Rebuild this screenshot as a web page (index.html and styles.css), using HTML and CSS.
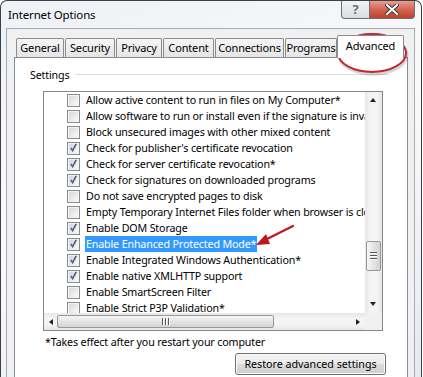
FILE: index.html
```html
<!DOCTYPE html>
<html>
<head>
  <meta charset="UTF-8">
  <title>Internet Options</title>
  <link rel="stylesheet" href="styles.css">
</head>
<body>
  <div class="window">
    <div class="titlebar">
      <span class="title">Internet Options</span>
      <div class="caption">
        <span class="cap cap-help">?</span>
        <span class="cap cap-close">
          <svg width="14" height="11" viewBox="0 0 14 11"><path d="M2 1 L12 10 M12 1 L2 10" stroke="#3b3b3b" stroke-width="4" stroke-linecap="square"/><path d="M2 1 L12 10 M12 1 L2 10" stroke="#fff" stroke-width="2" stroke-linecap="square"/></svg>
        </span>
      </div>
    </div>
    <div class="client">
      <div class="tabs">
        <span class="tab t-general">General</span>
        <span class="tab t-security">Security</span>
        <span class="tab t-privacy">Privacy</span>
        <span class="tab t-content">Content</span>
        <span class="tab t-connections">Connections</span>
        <span class="tab t-programs">Programs</span>
        <span class="tab t-advanced active">Advanced</span>
      </div>
      <div class="panel">
        <div class="group-label"><span>Settings</span><span class="rule"></span></div>
        <div class="listbox">
          <div class="rows">
            <div class="row"><span class="cb"></span><span class="label">Allow active content to run in files on My Computer*</span></div>
            <div class="row"><span class="cb"></span><span class="label">Allow software to run or install even if the signature is invalid</span></div>
            <div class="row"><span class="cb"></span><span class="label">Block unsecured images with other mixed content</span></div>
            <div class="row"><span class="cb on"></span><span class="label">Check for publisher's certificate revocation</span></div>
            <div class="row"><span class="cb on"></span><span class="label">Check for server certificate revocation*</span></div>
            <div class="row"><span class="cb on"></span><span class="label">Check for signatures on downloaded programs</span></div>
            <div class="row"><span class="cb"></span><span class="label">Do not save encrypted pages to disk</span></div>
            <div class="row"><span class="cb"></span><span class="label">Empty Temporary Internet Files folder when browser is closed</span></div>
            <div class="row"><span class="cb on"></span><span class="label">Enable DOM Storage</span></div>
            <div class="row"><span class="cb on"></span><span class="label selected">Enable Enhanced Protected Mode*</span></div>
            <div class="row"><span class="cb on"></span><span class="label">Enable Integrated Windows Authentication*</span></div>
            <div class="row"><span class="cb on"></span><span class="label">Enable native XMLHTTP support</span></div>
            <div class="row"><span class="cb"></span><span class="label">Enable SmartScreen Filter</span></div>
            <div class="row"><span class="cb"></span><span class="label">Enable Strict P3P Validation*</span></div>
          </div>
          <div class="vscroll">
            <span class="arr arr-up"></span>
            <span class="vthumb"><i></i><i></i><i></i></span>
            <span class="arr arr-down"></span>
          </div>
          <div class="hscroll">
            <span class="arr arr-left"></span>
            <span class="hthumb"><i></i><i></i><i></i></span>
            <span class="arr arr-right"></span>
          </div>
          <div class="corner"></div>
        </div>
        <p class="note">*Takes effect after you restart your computer</p>
        <div class="actions"><button class="btn">Restore advanced settings</button></div>
      </div>
    </div>

    <svg class="ring" width="78" height="46" viewBox="0 0 78 46">
      <ellipse cx="39" cy="24" rx="34" ry="19" fill="none" stroke="rgba(0,0,0,0.16)" stroke-width="3"/>
      <ellipse cx="38" cy="22" rx="34" ry="19" fill="none" stroke="#c4262e" stroke-width="2"/>
    </svg>
    <svg class="pointer" width="44" height="26" viewBox="0 0 44 26">
      <path d="M39 3 L9 18" stroke="#c0151c" stroke-width="2.2" stroke-linecap="round"/>
      <path d="M2 22 L12 11 L16 21 Z" fill="#c0151c"/>
    </svg>
  </div>
</body>
</html>
```

FILE: styles.css
```css
* {
  margin: 0;
  padding: 0;
  box-sizing: border-box;
}
html, body {
  height: 377px;
  overflow: hidden;
}
body {
  background: #fff;
  font-family: "Noto Sans", "Open Sans", sans-serif;
  font-size: 10.7px;
  letter-spacing: -0.15px;
  color: #000;
}
.window {
  position: relative;
  width: 422px;
  height: 377px;
  overflow: hidden;
  border: 1px solid #3c3f44;
  border-bottom: none;
  border-radius: 7px 7px 0 0;
  background: linear-gradient(160deg, #eef1f5 0%, #f9fafc 45%, #e6eaef 100%);
  padding: 0 6px 0 5px;
}
.titlebar {
  display: flex;
  justify-content: space-between;
  align-items: flex-start;
  height: 27px;
}
.title {
  padding: 6px 0 0 2px;
  line-height: 16px;
  font-size: 11.5px;
}
.caption {
  display: flex;
  margin-top: -1px;
}
.cap {
  display: flex;
  align-items: center;
  justify-content: center;
  height: 19px;
  border: 1px solid #6b6f77;
  border-top: none;
}
.cap-help {
  width: 29px;
  border-radius: 0 0 0 4px;
  background: linear-gradient(#f4f5f7, #d9dce1);
  color: #6e6e6e;
  font-size: 13px;
  font-weight: bold;
}
.cap-close {
  width: 45px;
  border-left: none;
  border-radius: 0 0 4px 0;
  background: linear-gradient(#e8a598, #d0634f 55%, #c13f26);
}
.client {
  border: 1px solid #a7acb3;
  border-bottom: none;
  background: #f0f0f0;
  padding: 6px 6px 0 7px;
  height: 349px;
}
.tabs {
  display: flex;
  align-items: flex-end;
  gap: 1px;
  padding-left: 2px;
  height: 22px;
  position: relative;
  z-index: 1;
}
.tab {
  height: 19px;
  border: 1px solid #898c95;
  border-bottom: none;
  border-radius: 2px 2px 0 0;
  background: linear-gradient(#f5f5f5, #e5e5e5);
  text-align: center;
  line-height: 18px;
  font-size: 11px;
}
.tab.active {
  height: 23px;
  margin-bottom: -1px;
  margin-left: -1px;
  background: #fff;
  line-height: 19px;
}
.t-general { width: 48px; }
.t-security { width: 50px; }
.t-privacy { width: 46px; }
.t-content { width: 51px; }
.t-connections { width: 69px; }
.t-programs { width: 52px; }
.t-advanced { width: 67px; }
.panel {
  background: #fff;
  border: 1px solid #898c95;
  padding: 9px 24px 0 15px;
  height: 330px;
}
.group-label {
  display: flex;
  align-items: center;
  gap: 6px;
  line-height: 16px;
}
.group-label .rule {
  flex: 1;
  height: 2px;
  border-top: 1px solid #d5dfe5;
  border-bottom: 1px solid #fff;
  margin-right: -6px;
}
.listbox {
  margin: 8px 0 0 13px;
  height: 240px;
  border: 1px solid #828790;
  display: grid;
  grid-template-columns: 1fr 17px;
  grid-template-rows: 1fr 17px;
  overflow: hidden;
}
.rows {
  overflow: hidden;
  padding-left: 23px;
}
.row {
  display: flex;
  align-items: center;
  height: 16px;
  white-space: nowrap;
}
.cb {
  flex: none;
  width: 13px;
  height: 13px;
  margin-right: 5px;
  border: 1px solid #8a8a8a;
  background: linear-gradient(135deg, #d6d6d6, #fbfbfb);
  box-shadow: inset 0 0 0 1px #f4f4f4;
  position: relative;
}
.cb.on::after {
  content: "";
  position: absolute;
  left: 2px;
  top: 0;
  width: 7px;
  height: 10px;
  background: no-repeat center / 7px 9px url("data:image/svg+xml,%3Csvg xmlns='http://www.w3.org/2000/svg' viewBox='0 0 7 9'%3E%3Cpath d='M0.8 5 L2.6 7.6 L6.2 0.8' fill='none' stroke='%234a5d8a' stroke-width='1.6'/%3E%3C/svg%3E");
}
.label {
  padding: 0 1px;
  line-height: 16px;
}
.label.selected {
  background: #3399ff;
  color: #fff;
}
.vscroll {
  background: linear-gradient(90deg, #e6e6e6, #f4f4f4 30%, #f4f4f4 70%, #e6e6e6);
  display: flex;
  flex-direction: column;
  align-items: center;
  padding-right: 1px;
}
.hscroll {
  background: linear-gradient(#e6e6e6, #f4f4f4 30%, #f4f4f4 70%, #e6e6e6);
  display: flex;
  align-items: center;
  padding: 0 5px 0 5px;
}
.corner {
  background: #f0f0f0;
}
.arr {
  width: 0;
  height: 0;
  border: 3.5px solid transparent;
}
.arr-up {
  border-bottom: 4px solid #222;
  border-top: none;
  margin-top: 6px;
}
.arr-down {
  border-top: 4px solid #222;
  border-bottom: none;
  margin-top: auto;
  margin-bottom: 7px;
}
.arr-left {
  border-right: 4px solid #222;
  border-left: none;
}
.arr-right {
  border-left: 4px solid #222;
  border-right: none;
  margin-left: auto;
}
.vthumb {
  margin-top: 139px;
  width: 15px;
  height: 30px;
  border: 1px solid #979797;
  border-radius: 2px;
  background: linear-gradient(90deg, #f6f6f6, #e4e4e4 50%, #d3d3d3);
  display: flex;
  flex-direction: column;
  align-items: center;
  justify-content: center;
  gap: 1px;
}
.vthumb i {
  width: 7px;
  height: 2px;
  border-top: 1px solid #555;
  border-bottom: 1px solid #fff;
}
.hthumb {
  margin-left: 4px;
  width: 217px;
  height: 13px;
  border: 1px solid #979797;
  border-radius: 2px;
  background: linear-gradient(#f6f6f6, #e4e4e4 50%, #d3d3d3);
  display: flex;
  align-items: center;
  justify-content: center;
  gap: 1px;
}
.hthumb i {
  width: 2px;
  height: 7px;
  border-left: 1px solid #555;
  border-right: 1px solid #fff;
}
.note {
  margin: 3px 0 0 15px;
  line-height: 16px;
}
.actions {
  display: flex;
  justify-content: flex-end;
  margin: 3px -3px 0 0;
}
.btn {
  font: inherit;
  width: 151px;
  height: 22px;
  border: 1px solid #707070;
  border-radius: 3px;
  background: linear-gradient(#f2f2f2 0%, #ebebeb 50%, #dddddd 50%, #cfcfcf 100%);
  box-shadow: inset 0 0 0 1px #fcfcfc;
  color: #000;
}
.ring {
  position: absolute;
  left: 333px;
  top: 30px;
}
.pointer {
  position: absolute;
  left: 253px;
  top: 222px;
}
```
